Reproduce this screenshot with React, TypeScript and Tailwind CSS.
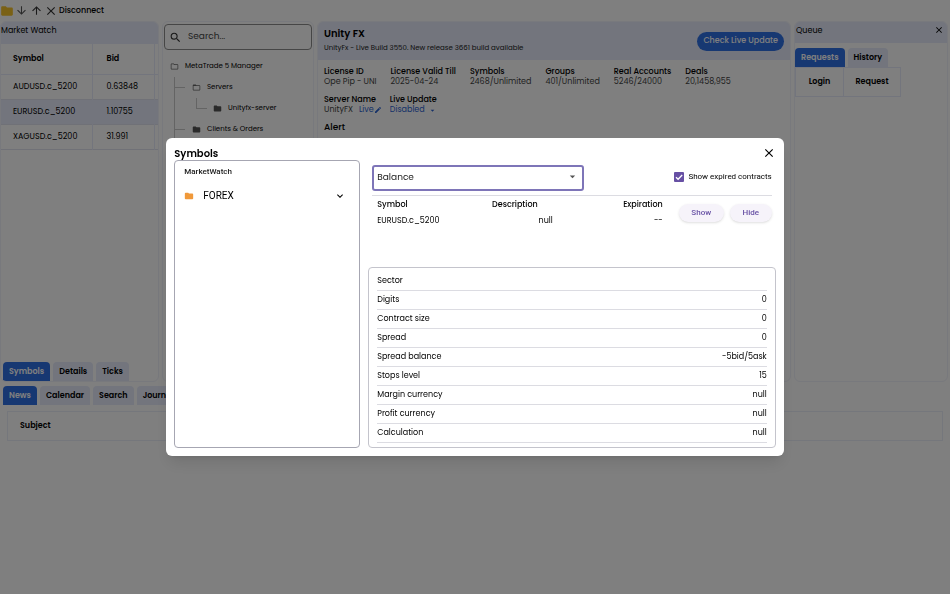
import type { ReactNode } from "react";
import {
  MdArrowDownward,
  MdArrowDropDown,
  MdArrowUpward,
  MdClose,
  MdEdit,
  MdExpandMore,
  MdFolder,
  MdFolderOpen,
  MdOutlineFolder,
  MdSearch,
} from "react-icons/md";

const quotes = [
  { symbol: "AUDUSD.c_5200", bid: "0.63848" },
  { symbol: "EURUSD.c_5200", bid: "1.10755", selected: true },
  { symbol: "XAGUSD.c_5200", bid: "31.991" },
];

const license = [
  ["License ID", "Ope Pip - UNI"],
  ["License Valid Till", "2025-04-24"],
  ["Symbols", "2468/Unlimited"],
  ["Groups", "401/Unlimited"],
  ["Real Accounts", "5246/24000"],
  ["Deals", "20,1458,955"],
];

const details = [
  ["Sector", ""],
  ["Digits", "0"],
  ["Contract size", "0"],
  ["Spread", "0"],
  ["Spread balance", "-5bid/5ask"],
  ["Stops level", "15"],
  ["Margin currency", "null"],
  ["Profit currency", "null"],
  ["Calculation", "null"],
];

function Tabs({ items }: { items: string[] }) {
  return (
    <div className="flex gap-[3px]" role="tablist">
      {items.map((item, i) => (
        <button
          key={item}
          type="button"
          role="tab"
          aria-selected={i === 0}
          className={
            i === 0
              ? "h-[19px] rounded-t-[4px] bg-[#2f70e4] px-[6px] text-[8px] font-semibold text-white"
              : "h-[19px] rounded-t-[4px] bg-[#e6ebfa] px-[6px] text-[8px] font-semibold text-black"
          }
        >
          {item}
        </button>
      ))}
    </div>
  );
}

function Panel({ className, children }: { className: string; children: ReactNode }) {
  return (
    <section className={`flex flex-col overflow-hidden rounded-[6px] border border-[#f0f2fa] ${className}`}>
      {children}
    </section>
  );
}

function Toolbar() {
  return (
    <header className="flex h-[21px] items-center text-[#555]">
      <MdFolder className="size-[14px] text-[#f5c22b]" />
      <button type="button" aria-label="Download" className="ml-[1px]">
        <MdArrowDownward className="size-[13px]" />
      </button>
      <button type="button" aria-label="Upload" className="ml-[2px] text-[#333]">
        <MdArrowUpward className="size-[13px]" />
      </button>
      <button type="button" className="ml-[1px] flex items-center gap-[1px] text-[8px] font-medium text-black">
        <MdClose className="size-[14px] text-[#333]" />
        Disconnect
      </button>
    </header>
  );
}

function MarketWatch() {
  return (
    <Panel className="w-[159px] shrink-0">
      <h2 className="h-[22px] bg-[#e6ebfa] pt-[3px] text-[8px] leading-[12px] text-black">Market Watch</h2>
      <table className="w-full table-fixed text-left text-[8px]">
        <colgroup>
          <col className="w-[91px]" />
          <col className="w-[62px]" />
          <col />
        </colgroup>
        <thead>
          <tr className="h-[30px] border-b border-[#e6ebfa] text-black">
            <th className="border-r border-[#e6ebfa] pl-[12px] font-semibold">Symbol</th>
            <th className="border-r border-[#e6ebfa] pl-[14px] font-semibold">Bid</th>
            <th />
          </tr>
        </thead>
        <tbody className="text-black">
          {quotes.map((q) => (
            <tr
              key={q.symbol}
              className={
                q.selected
                  ? "h-[25px] border-b border-[#e0e3ee] bg-[#e6ebfa]"
                  : "h-[25px] border-b border-[#e0e3ee]"
              }
            >
              <td className="border-r border-[#e6ebfa] pl-[12px]">{q.symbol}</td>
              <td className="border-r border-[#e6ebfa] pl-[14px]">{q.bid}</td>
              <td />
            </tr>
          ))}
        </tbody>
      </table>
      <div className="mt-auto pl-[2px]">
        <Tabs items={["Symbols", "Details", "Ticks"]} />
      </div>
    </Panel>
  );
}

function Navigator() {
  return (
    <Panel className="w-[152px] shrink-0 px-[1px] pt-[2px]">
      <label className="flex h-[26px] shrink-0 items-center gap-[6px] rounded-[4px] border border-[#8c8c8c] px-[4px]">
        <MdSearch className="size-[13px] shrink-0 text-[#333]" />
        <input
          type="text"
          aria-label="Search"
          placeholder="Search..."
          className="w-full min-w-0 text-[9px] outline-none placeholder:text-[#444]"
        />
      </label>
      <ul className="mt-[6px] text-[7px] text-black">
        <li className="flex h-[21px] items-center gap-[6px] pl-[6px]">
          <MdOutlineFolder className="size-[9px] text-[#666]" />
          MetaTrade 5 Manager
        </li>
        <li className="pl-[10px]">
          <ul className="border-l border-[#c8c8c8]">
            <li className="flex h-[21px] items-center gap-[6px]">
              <span className="mr-[1px] w-[10px] border-t border-[#c8c8c8]" />
              <MdFolderOpen className="size-[9px] text-[#666]" />
              Servers
            </li>
            <li className="flex h-[21px] items-center gap-[6px] pl-[21px]">
              <span className="mb-[10px] h-[11px] w-[11px] border-b border-l border-[#c8c8c8]" />
              <MdFolder className="size-[9px] text-[#555]" />
              Unityfx-server
            </li>
            <li className="flex h-[21px] items-center gap-[6px]">
              <span className="mr-[1px] w-[10px] border-t border-[#c8c8c8]" />
              <MdFolder className="size-[9px] text-[#555]" />
              Clients &amp; Orders
            </li>
          </ul>
        </li>
      </ul>
    </Panel>
  );
}

function Overview() {
  return (
    <Panel className="min-w-0 flex-1">
      <div className="flex h-[38px] shrink-0 items-center justify-between bg-[#e6ebfa] px-[6px]">
        <div>
          <h1 className="text-[10px] leading-[14px] font-semibold text-black">Unity FX</h1>
          <p className="text-[7px] leading-[14px] text-[#222]">
            UnityFx - Live Build 3550. New release 3661 build available
          </p>
        </div>
        <button type="button" className="h-[19px] rounded-full bg-[#2f70e4] px-[6px] text-[8px] font-medium text-white">
          Check Live Update
        </button>
      </div>
      <div className="px-[6px] pt-[7px] text-[8px] leading-[10px]">
        <dl className="flex gap-[14px]">
          {license.map(([name, value]) => (
            <div key={name}>
              <dt className="font-medium text-black">{name}</dt>
              <dd className="text-[#444]">{value}</dd>
            </div>
          ))}
        </dl>
        <div className="mt-[8px] flex gap-[8px]">
          <div>
            <p className="font-medium text-black">Server Name</p>
            <p className="flex items-center text-[#444]">
              UnityFX
              <a href="#live" className="ml-[6px] flex items-center text-[#2b62d0]">
                Live
                <MdEdit className="size-[8px]" />
              </a>
            </p>
          </div>
          <div>
            <label htmlFor="live-update" className="block font-medium text-black">
              Live Update
            </label>
            <div className="flex items-center text-[#2b62d0]">
              <select id="live-update" className="w-[38px] appearance-none">
                <option>Disabled</option>
              </select>
              <MdArrowDropDown className="size-[9px]" />
            </div>
          </div>
        </div>
        <h2 className="mt-[7px] text-[9px] leading-[10px] font-medium text-black">Alert</h2>
      </div>
    </Panel>
  );
}

function Queue() {
  return (
    <Panel className="w-[154px] shrink-0">
      <div className="flex h-[21px] shrink-0 justify-between bg-[#e6ebfa] pt-[3px] pr-[3px] pl-[1px]">
        <h2 className="text-[8px] leading-[12px] text-black">Queue</h2>
        <button type="button" aria-label="Close queue" className="h-[10px]">
          <MdClose className="size-[10px]" />
        </button>
      </div>
      <div className="mt-[5px]">
        <Tabs items={["Requests", "History"]} />
      </div>
      <table className="w-[106px] table-fixed border border-[#e6ebfa] text-[8px] text-black">
        <thead>
          <tr className="h-[29px]">
            <th className="w-[48px] border-r border-[#e6ebfa] font-semibold">Login</th>
            <th className="font-semibold">Request</th>
          </tr>
        </thead>
      </table>
    </Panel>
  );
}

function SymbolsDialog() {
  return (
    <div className="fixed inset-0 flex items-center justify-center bg-black/50">
      <div
        role="dialog"
        aria-modal="true"
        aria-labelledby="dialog-title"
        className="w-[65%] rounded-[6px] bg-white p-[8px] shadow-lg"
      >
        <div className="flex h-[14px] items-center justify-between">
          <h2 id="dialog-title" className="text-[10px] font-semibold text-black">
            Symbols
          </h2>
          <button type="button" aria-label="Close" className="text-black">
            <MdClose className="size-[14px]" />
          </button>
        </div>
        <div className="flex gap-[8px]">
          <div className="w-[186px] shrink-0 rounded-[4px] border border-[#a6a6b2] px-[9px] pt-[5px]">
            <h3 className="font-['Roboto',sans-serif] text-[8px] leading-[12px] font-medium text-[#222]">MarketWatch</h3>
            <button
              type="button"
              className="mt-[12px] flex w-full items-center pr-[4px] font-['Roboto',sans-serif] text-[10px] leading-[12px] text-black"
            >
              <MdFolder className="size-[10px] text-[#f0993a]" />
              <span className="ml-[9px] flex-1 text-left">FOREX</span>
              <MdExpandMore className="size-[12px]" />
            </button>
          </div>
          <div className="flex min-w-0 flex-1 flex-col">
            <div className="mx-[4px] mt-[3px] flex items-center justify-between border-b border-[#dcdce2] pb-[4px]">
              <div className="relative w-[212px]">
                <select
                  aria-label="Symbol set"
                  className="h-[26px] w-full appearance-none rounded-[3px] border-2 border-[#7e75b8] px-[3px] text-[9px] text-[#222]"
                >
                  <option>Balance</option>
                </select>
                <MdArrowDropDown className="pointer-events-none absolute top-[7px] right-[5px] size-[13px] text-[#555]" />
              </div>
              <label className="flex items-center gap-[4px] font-['Roboto',sans-serif] text-[8px] text-black">
                <span className="relative size-[10px]">
                  <input
                    type="checkbox"
                    defaultChecked
                    className="block size-[10px] appearance-none rounded-[1px] bg-[#6750a4]"
                  />
                  <svg viewBox="0 0 10 10" className="pointer-events-none absolute inset-0 size-[10px]">
                    <path d="M2 5.2 4.1 7.3 8.2 3" fill="none" stroke="white" strokeWidth="1.3" />
                  </svg>
                </span>
                Show expired contracts
              </label>
            </div>
            <div className="mr-[4px] ml-[9px] flex h-[71px] items-start">
              <table className="mt-[1px] min-w-0 flex-1 table-fixed text-[8px] text-black">
                <thead>
                  <tr className="h-[16px]">
                    <th className="w-[84px] text-left font-medium">Symbol</th>
                    <th className="pr-[15px] text-right font-medium">Description</th>
                    <th className="w-[110px] text-right font-medium">Expiration</th>
                  </tr>
                </thead>
                <tbody>
                  <tr className="h-[16px]">
                    <td>EURUSD.c_5200</td>
                    <td className="text-right">null</td>
                    <td className="text-right">--</td>
                  </tr>
                </tbody>
              </table>
              <div className="mt-[8px] ml-[16px] flex gap-[6px] font-['Roboto',sans-serif] text-[8px] font-medium text-[#6750a4]">
                <button type="button" className="h-[18px] w-[45px] rounded-full bg-[#f6f3fa] shadow-sm">
                  Show
                </button>
                <button type="button" className="h-[18px] w-[42px] rounded-full bg-[#f6f3fa] shadow-sm">
                  Hide
                </button>
              </div>
            </div>
            <dl className="rounded-[4px] border border-[#c4c4cc] px-[8px] pt-[4px] pb-[4px] text-[8px] text-black">
              {details.map(([name, value]) => (
                <div key={name} className="flex h-[19px] items-center justify-between border-b border-[#dcdce2]">
                  <dt>{name}</dt>
                  <dd>{value}</dd>
                </div>
              ))}
            </dl>
          </div>
        </div>
      </div>
    </div>
  );
}

export default function App() {
  return (
    <div className="min-h-screen bg-white font-['Poppins','Inter',sans-serif]">
      <Toolbar />
      <main className="flex h-[361px] gap-[3px] pr-[2px]">
        <MarketWatch />
        <Navigator />
        <Overview />
        <Queue />
      </main>
      <section className="mt-[4px]">
        <div className="pl-[3px]">
          <Tabs items={["News", "Calendar", "Search", "Journal"]} />
        </div>
        <div className="mt-[6px] px-[7px]">
          <table className="w-full border border-[#ebeef8] text-left text-[8px] text-black">
            <thead>
              <tr className="h-[29px]">
                <th className="pl-[12px] font-semibold">Subject</th>
              </tr>
            </thead>
          </table>
        </div>
      </section>
      <SymbolsDialog />
    </div>
  );
}
